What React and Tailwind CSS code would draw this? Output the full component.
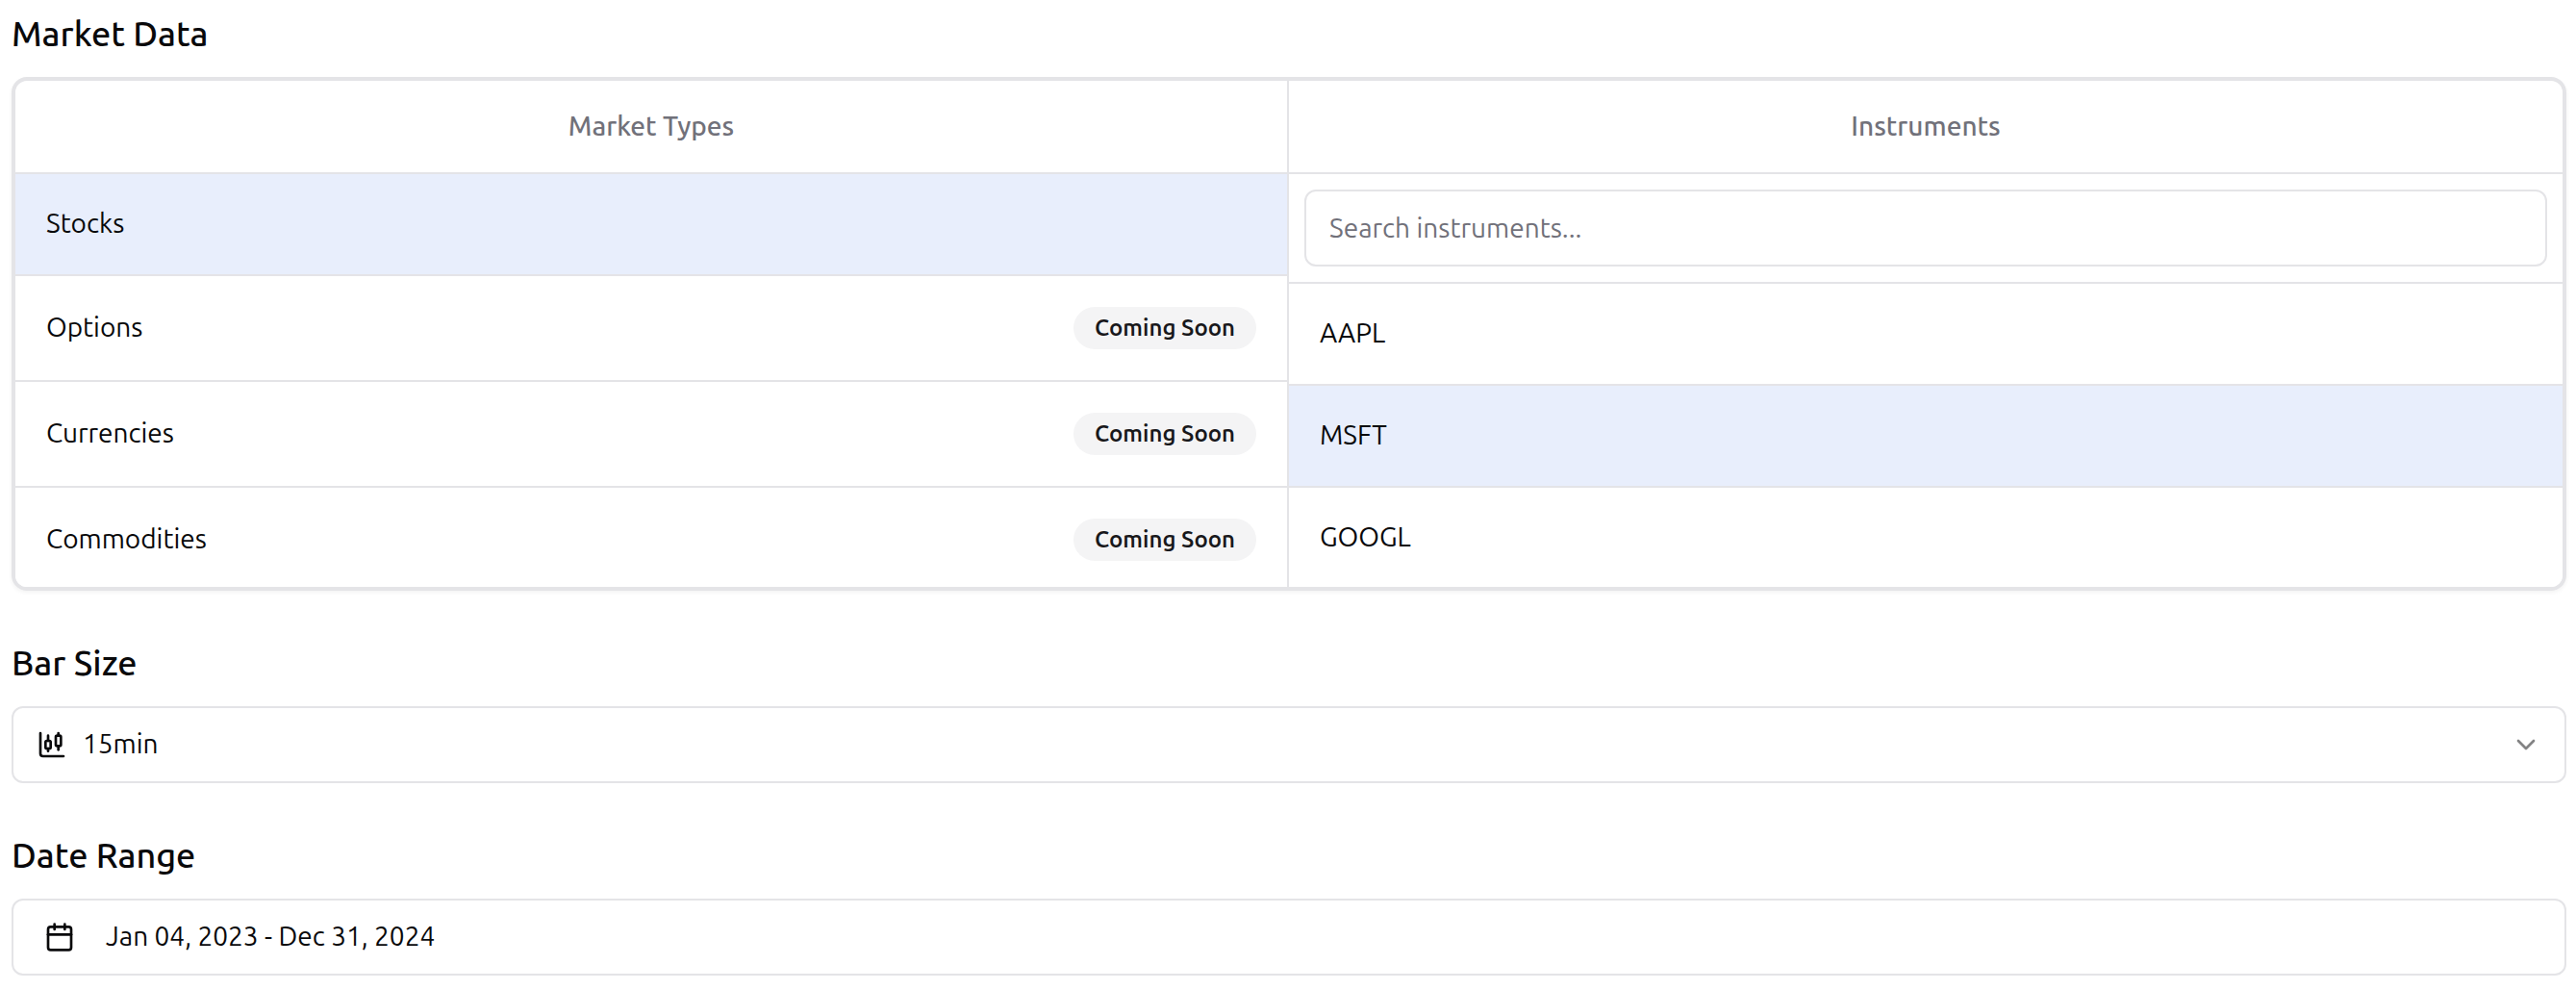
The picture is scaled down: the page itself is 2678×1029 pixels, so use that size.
import { useState } from "react";
import { Calendar, ChartCandlestick, ChevronDown } from "lucide-react";

const marketTypes = [
  { name: "Stocks", available: true },
  { name: "Options", available: false },
  { name: "Currencies", available: false },
  { name: "Commodities", available: false },
];
const instruments = ["AAPL", "MSFT", "GOOGL"];
const barSizes = ["1min", "5min", "15min", "30min", "1hour", "1day"];

function ColumnHeader({ children }) {
  return (
    <h3 className="flex h-[97px] shrink-0 items-center justify-center border-b-2 border-[#e4e4e7] font-medium text-[#71717a]">
      {children}
    </h3>
  );
}

function Row({ selected, children, ...props }) {
  return (
    <button
      type="button"
      aria-pressed={selected}
      className={
        "flex w-full items-center justify-between p-8 text-left " +
        (selected ? "bg-[#e8eefc]" : "bg-white")
      }
      {...props}
    >
      {children}
    </button>
  );
}

export default function App() {
  const [market, setMarket] = useState("Stocks");
  const [instrument, setInstrument] = useState("MSFT");
  const [query, setQuery] = useState("");
  const [barSize, setBarSize] = useState("15min");
  const visible = instruments.filter((i) => i.toLowerCase().includes(query.toLowerCase()));

  return (
    <main className="flex flex-col gap-12 bg-white py-2 pr-[10px] pl-3 font-['Ubuntu_Sans',Ubuntu,'Noto_Sans',sans-serif] text-[28px] leading-10 text-[#09090b]">
      <section className="flex flex-col gap-4">
        <h2 className="text-4xl leading-14 font-medium">Market Data</h2>
        <div className="grid grid-cols-2 overflow-hidden rounded-2xl border-4 border-[#e4e4e7] shadow-[0_2px_4px_rgba(0,0,0,0.05)]">
          <div className="border-r-2 border-[#e4e4e7]">
            <ColumnHeader>Market Types</ColumnHeader>
            <ul className="max-h-[429px] overflow-y-auto [scrollbar-width:none]">
              {marketTypes.map(({ name, available }) => (
                <li key={name} className="border-b-2 border-[#e4e4e7] last:border-b-0">
                  <Row
                    selected={market === name}
                    disabled={!available}
                    onClick={() => setMarket(name)}
                  >
                    <span>{name}</span>
                    {!available && (
                      <span className="rounded-full border-2 border-transparent bg-[#f4f4f5] px-5 text-2xl leading-10 font-semibold text-[#18181b]">
                        Coming Soon
                      </span>
                    )}
                  </Row>
                </li>
              ))}
            </ul>
          </div>
          <div>
            <ColumnHeader>Instruments</ColumnHeader>
            <div className="border-b-2 border-[#e4e4e7] p-4">
              <input
                type="text"
                aria-label="Search instruments"
                placeholder="Search instruments..."
                value={query}
                onChange={(e) => setQuery(e.target.value)}
                className="block h-20 w-full rounded-xl border-2 border-[#e4e4e7] bg-white px-6 placeholder:text-[#71717a]"
              />
            </div>
            <ul className="max-h-[315px] overflow-y-auto [scrollbar-width:none]">
              {visible.map((name) => (
                <li key={name} className="border-b-2 border-[#e4e4e7] last:border-b-0">
                  <Row selected={instrument === name} onClick={() => setInstrument(name)}>
                    <span>{name}</span>
                  </Row>
                </li>
              ))}
            </ul>
          </div>
        </div>
      </section>

      <section className="flex flex-col gap-4">
        <label htmlFor="bar-size" className="text-4xl leading-14 font-medium">
          Bar Size
        </label>
        <div className="relative">
          <ChartCandlestick className="pointer-events-none absolute inset-y-0 left-[26px] my-auto size-8" />
          <select
            id="bar-size"
            value={barSize}
            onChange={(e) => setBarSize(e.target.value)}
            className="block h-20 w-full appearance-none rounded-xl border-2 border-[#e4e4e7] bg-white pr-20 pl-[72px]"
          >
            {barSizes.map((size) => (
              <option key={size}>{size}</option>
            ))}
          </select>
          <ChevronDown className="pointer-events-none absolute inset-y-0 right-[26px] my-auto size-8 opacity-50" />
        </div>
      </section>

      <section className="flex flex-col gap-4">
        <h2 id="date-range" className="text-4xl leading-14 font-medium">
          Date Range
        </h2>
        <button
          type="button"
          aria-describedby="date-range"
          className="flex h-20 w-full items-center gap-8 rounded-xl border-2 border-[#e4e4e7] bg-white px-8"
        >
          <Calendar className="size-8" />
          <span>Jan 04, 2023 - Dec 31, 2024</span>
        </button>
      </section>
    </main>
  );
}
